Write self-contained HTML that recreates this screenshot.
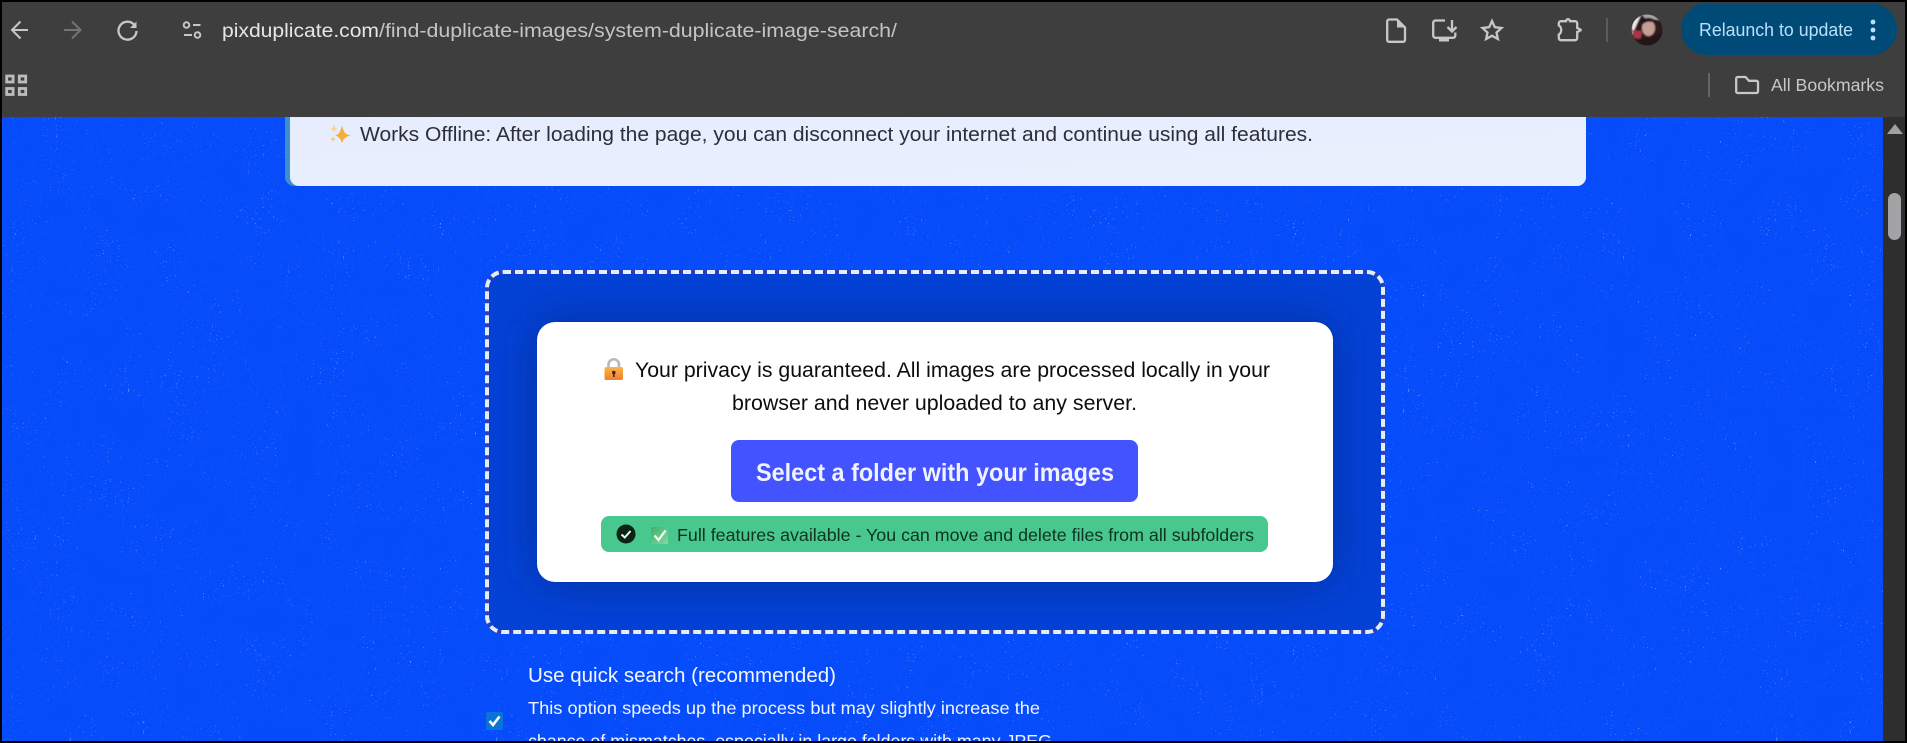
<!DOCTYPE html>
<html lang="en"><head><meta charset="utf-8"><title>System Duplicate Image Search</title>
<style>
html,body{margin:0;padding:0;background:#000;width:1907px;height:743px;overflow:hidden}
svg{display:block}
text{font-family:"Liberation Sans",Arial,sans-serif;white-space:pre}
</style></head><body>
<svg xmlns="http://www.w3.org/2000/svg" width="1907" height="743" viewBox="0 0 1907 743">
<defs>
<filter id="noise" x="0" y="0" width="100%" height="100%" color-interpolation-filters="sRGB">
<feTurbulence type="fractalNoise" baseFrequency="0.6" numOctaves="2" seed="7" result="n"/>
<feColorMatrix in="n" type="matrix" values="0 0 0 0 0.5  0 0 0 0 0.72  0 0 0 0 1  1.6 1.6 0 0 -2.05" result="dots"/>
<feTurbulence type="fractalNoise" baseFrequency="0.025" numOctaves="3" seed="3" result="m"/>
<feColorMatrix in="m" type="matrix" values="0 0 0 0 1  0 0 0 0 1  0 0 0 0 1  3.5 0 0 0 -1.2" result="patch"/>
<feComposite in="dots" in2="patch" operator="in"/>
<feComponentTransfer><feFuncA type="linear" slope="2.4" intercept="0"/></feComponentTransfer>
</filter>
<filter id="blur" x="-20%" y="-30%" width="140%" height="160%"><feGaussianBlur stdDeviation="22"/></filter>
<filter id="soft" x="-10%" y="-10%" width="120%" height="120%"><feGaussianBlur stdDeviation="0.7"/></filter>
<clipPath id="dz"><rect x="487" y="272" width="896" height="360" rx="16"/></clipPath>
<clipPath id="av"><circle cx="1647" cy="30" r="15.5"/></clipPath>
<linearGradient id="lockg" x1="0" y1="0" x2="0" y2="1"><stop offset="0" stop-color="#fbb54a"/><stop offset="1" stop-color="#ee7f2e"/></linearGradient>
<linearGradient id="chk" x1="0" y1="0" x2="1" y2="1"><stop offset="0" stop-color="#3fae6c"/><stop offset="1" stop-color="#86d8a4"/></linearGradient>
<linearGradient id="info" x1="0" y1="0" x2="1" y2="1"><stop offset="0" stop-color="#e6ecfd"/><stop offset="1" stop-color="#e9f0fd"/></linearGradient>
</defs>

<!-- page background -->
<rect x="2" y="117" width="1881" height="624" fill="#074cfb"/>
<rect x="2" y="117" width="1881" height="624" filter="url(#noise)"/>

<!-- info card -->
<rect x="285" y="100" width="1301" height="86" rx="9" fill="#3e8ed0"/>
<path d="M290 100H1586V177a9 9 0 0 1-9 9H299a9 9 0 0 1-9-9Z" fill="url(#info)"/>
<g>
<path d="M342 125C343.500 132 345 134.500 351 135.500C345 136.500 343.500 139 342 143C340.500 139 339 136.500 335 135.500C339 134.500 340.500 132 342 125Z" fill="#f6ad3c"/>
<path d="M334 124.500C334.600 127.500 335.500 128.400 338 129C335.500 129.600 334.600 130.500 334 133C333.400 130.500 332.500 129.600 330 129C332.500 128.400 333.400 127.500 334 124.500Z" fill="#fbd58a"/>
<path d="M333 136C333.400 138 334 138.600 336 139C334 139.400 333.400 140 333 142.500C332.600 140 332 139.400 330 139C332 138.600 332.600 138 333 136Z" fill="#f7c878"/>
</g>
<text x="360" y="141" font-size="20" fill="#2b2f3a" textLength="953" lengthAdjust="spacingAndGlyphs">Works Offline: After loading the page, you can disconnect your internet and continue using all features.</text>

<!-- drop zone -->
<rect x="487" y="272" width="896" height="360" rx="16" fill="#0442d6"/>
<g clip-path="url(#dz)"><rect x="537" y="322" width="796" height="260" rx="18" fill="#0a2a90" opacity=".8" filter="url(#blur)"/></g>
<rect x="487" y="272" width="896" height="360" rx="16" fill="none" stroke="#2a3fb8" stroke-width="4"/>
<rect x="487" y="272" width="896" height="360" rx="16" fill="none" stroke="#e6ebf4" stroke-width="4" stroke-dasharray="8 4"/>

<!-- white card -->
<rect x="537" y="322" width="796" height="260" rx="18" fill="#fff"/>

<!-- lock emoji -->
<path d="M608.500 368V364.500a5 5 0 0 1 10.500 0V368" fill="none" stroke="#b7b7bd" stroke-width="2.600"/>
<rect x="604.500" y="367" width="18.500" height="13" rx="1.800" fill="url(#lockg)"/>
<circle cx="613.800" cy="372.500" r="1.800" fill="#3a2a20"/><rect x="613" y="373" width="1.600" height="4" fill="#3a2a20"/>

<text x="635" y="377" font-size="21" fill="#0d0d0d" textLength="635" lengthAdjust="spacingAndGlyphs">Your privacy is guaranteed. All images are processed locally in your</text>
<text x="732" y="410" font-size="21" fill="#0d0d0d" textLength="405" lengthAdjust="spacingAndGlyphs">browser and never uploaded to any server.</text>

<!-- button -->
<rect x="731" y="440" width="407" height="62" rx="8" fill="#4353ff"/>
<text x="756" y="481" font-size="25" font-weight="700" fill="#f0f2ff" textLength="358" lengthAdjust="spacingAndGlyphs">Select a folder with your images</text>

<!-- green status -->
<rect x="601" y="516" width="667" height="36" rx="8" fill="#48c78e"/>
<circle cx="626" cy="534" r="9.500" fill="#0d2318"/>
<path d="M621.500 534.500L624.800 537.500L630.500 531" fill="none" stroke="#e8fff2" stroke-width="2"/>
<rect x="651" y="527" width="17" height="17" rx="1" fill="url(#chk)"/>
<path d="M654.500 535.500L658.500 540L665.500 530.500" fill="none" stroke="#f2fff6" stroke-width="2.200"/>
<text x="677" y="541" font-size="17.500" fill="#0e3322" textLength="577" lengthAdjust="spacingAndGlyphs">Full features available - You can move and delete files from all subfolders</text>

<!-- quick search -->
<text x="528" y="682" font-size="20" fill="#f4f7ff" textLength="308" lengthAdjust="spacingAndGlyphs">Use quick search (recommended)</text>
<text x="528" y="714" font-size="17.500" fill="#eef3ff" textLength="512" lengthAdjust="spacingAndGlyphs">This option speeds up the process but may slightly increase the</text>
<text x="528" y="747" font-size="17.500" fill="#eef3ff" textLength="524" lengthAdjust="spacingAndGlyphs">chance of mismatches, especially in large folders with many JPEG</text>
<rect x="486" y="712" width="17" height="18" rx="1.500" fill="#0a73d8"/>
<path d="M489.500 721L493 725L499.500 716.500" fill="none" stroke="#fff" stroke-width="2.600"/>

<!-- scrollbar -->
<rect x="1883" y="117" width="22" height="624" fill="#2e2e2e"/>
<path d="M1895 124L1903 134H1887Z" fill="#a0a0a3"/>
<rect x="1888" y="193" width="13" height="47" rx="6.500" fill="#a3a3a6"/>

<!-- chrome -->
<rect x="2" y="2" width="1903" height="115" fill="#3e3e3e"/>
<rect x="0" y="0" width="1907" height="2" fill="#000"/>
<rect x="0" y="0" width="2" height="743" fill="#000"/>
<rect x="1905" y="0" width="2" height="743" fill="#000"/>
<rect x="0" y="741" width="1907" height="2" fill="#000"/>

<g fill="none" stroke="#c7c7c7" stroke-width="2">
<path d="M28 30H12.500M20.500 21.500L12 30L20.500 38.500"/>
<path d="M64 30H80M72 21.500L80.500 30L72 38.500" stroke="#737373"/>
<path d="M134.500 25A9 9 0 1 0 136.500 31" stroke-width="2.300"/>
<circle cx="186.500" cy="25" r="2.800"/><path d="M193 25H200.500M184 35H192"/><circle cx="197.500" cy="35" r="2.800"/>
<g stroke="#bcbcbc" stroke-width="2.800"><rect x="6.700" y="76" width="6.400" height="6"/><rect x="19.300" y="76" width="6.400" height="6"/><rect x="6.700" y="88.500" width="6.400" height="6"/><rect x="19.300" y="88.500" width="6.400" height="6"/></g>
</g>
<path d="M136.500 21.500V28H130Z" fill="#c7c7c7"/>

<text x="222" y="37" font-size="19.500" fill="#e6e6e6" textLength="157" lengthAdjust="spacingAndGlyphs">pixduplicate.com</text>
<text x="379" y="37" font-size="19.500" fill="#c4c4c4" textLength="518" lengthAdjust="spacingAndGlyphs">/find-duplicate-images/system-duplicate-image-search/</text>

<g fill="none" stroke="#c7c7c7" stroke-width="2.300">
<path d="M1389 19.500H1397L1405 27.500V40a1.800 1.800 0 0 1-1.800 1.800H1389a1.800 1.800 0 0 1-1.800-1.800V21.300a1.800 1.800 0 0 1 1.800-1.800Z"/>
<path d="M1445 20.500H1435.500a2.300 2.300 0 0 0-2.300 2.300V35.500a2.300 2.300 0 0 0 2.300 2.300H1453a2.300 2.300 0 0 0 2.300-2.300V32.500"/>
<path d="M1452 20V31M1447.500 27L1452 31.500L1456.500 27"/>
<path d="M1492 21L1494.800 27.200L1501.500 28L1496.500 32.500L1497.900 39L1492 35.700L1486.100 39L1487.500 32.500L1482.500 28L1489.200 27.200Z"/>
<path d="M1561 21.200H1566a2 2 0 0 1 4 0H1575a2.200 2.200 0 0 1 2.200 2.200V28a2 2 0 0 1 0 4V38a2.200 2.200 0 0 1-2.200 2.200H1561a2.200 2.200 0 0 1-2.200-2.200V34.500C1562 33 1562 27 1558.800 25.500V23.400a2.200 2.200 0 0 1 2.200-2.200Z"/>
<path d="M1736.200 92V78.500a1.500 1.500 0 0 1 1.500-1.500H1745.500L1749 80.800H1756.500a1.500 1.500 0 0 1 1.500 1.500V91.500a1.500 1.500 0 0 1-1.500 1.500H1737.500a1.300 1.300 0 0 1-1.300-1.300Z"/>
</g>
<path d="M1397 19.500L1405 27.500H1397Z" fill="#c7c7c7"/>
<rect x="1439" y="38" width="10" height="3.500" fill="#c7c7c7"/>
<circle cx="1580" cy="30" r="1.800" fill="#c7c7c7"/>
<rect x="1606" y="18" width="2" height="24" fill="#5c5c5c"/>
<rect x="1708" y="73" width="2" height="24" fill="#646464"/>

<!-- avatar -->
<g clip-path="url(#av)"><g filter="url(#soft)">
<rect x="1630" y="13" width="34" height="34" fill="#2a1a1b"/>
<path d="M1641 14H1660V20L1646 19Z" fill="#a9a4a6"/>
<ellipse cx="1648.500" cy="28" rx="6.500" ry="8" fill="#c79e96"/>
<path d="M1641 20C1646 17 1652 17 1656 21L1655 23C1651 21 1646 21 1642 25Z" fill="#1e1415"/>
<path d="M1641 15L1636 26L1632 35V20Z" fill="#ece8e8"/>
<path d="M1632 30L1642 31L1641 39L1634 38Z" fill="#a83646"/>
<path d="M1641 37C1648 40 1656 38 1664 30V47H1638Z" fill="#241617"/>
</g></g>

<!-- relaunch pill -->
<rect x="1681" y="3.500" width="216" height="51.500" rx="25.700" fill="#004a77"/>
<text x="1699" y="36" font-size="18" fill="#b6e0fb" textLength="154" lengthAdjust="spacingAndGlyphs">Relaunch to update</text>
<circle cx="1873" cy="22" r="2.400" fill="#b6e0fb"/><circle cx="1873" cy="30" r="2.400" fill="#b6e0fb"/><circle cx="1873" cy="38" r="2.400" fill="#b6e0fb"/>

<text x="1771" y="91" font-size="17.500" fill="#c7c7c7" textLength="113" lengthAdjust="spacingAndGlyphs">All Bookmarks</text>
</svg>
</body></html>
